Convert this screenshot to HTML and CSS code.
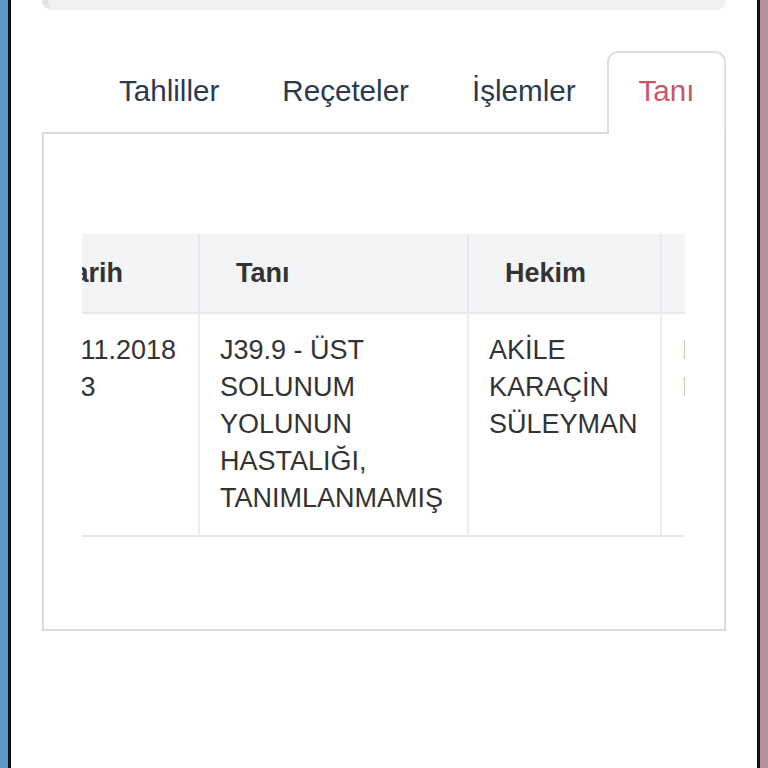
FILE: index.html
```html
<!DOCTYPE html>
<html lang="tr">
<head>
<meta charset="utf-8">
<link rel="stylesheet" href="styles.css">
</head>
<body>
<div class="frame">
  <div class="edge-left"></div>
  <div class="line"></div>
  <main class="main">
    <div class="top-card"></div>
    <nav class="tabs">
      <div class="tab">Tahliller</div>
      <div class="tab">Reçeteler</div>
      <div class="tab">İşlemler</div>
      <div class="tab active">Tanı</div>
    </nav>
    <section class="panel">
      <div class="table-scroll">
        <table class="grid">
          <thead>
            <tr>
              <th class="c1">Tarih</th>
              <th class="c2">Tanı</th>
              <th class="c3">Hekim</th>
              <th class="c4">Birim</th>
            </tr>
          </thead>
          <tbody>
            <tr>
              <td class="c1">12.11.2018 1:53</td>
              <td class="c2">J39.9 - ÜST SOLUNUM YOLUNUN HASTALIĞI, TANIMLANMAMIŞ</td>
              <td class="c3">AKİLE KARAÇİN SÜLEYMAN</td>
              <td class="c4">KBB POLİKLİNİĞİ</td>
            </tr>
          </tbody>
        </table>
      </div>
    </section>
  </main>
  <div class="line"></div>
  <div class="edge-right"></div>
</div>
</body>
</html>
```

FILE: styles.css
```css
* { box-sizing: border-box; }
html, body { margin: 0; padding: 0; }
body {
  width: 768px;
  height: 768px;
  overflow: hidden;
  font-family: "Liberation Sans", Arial, sans-serif;
  background: #fff;
}
.frame {
  display: flex;
  height: 768px;
}
.edge-left { width: 8px; flex: none; background: #5b97c7; }
.edge-right { width: 8px; flex: none; background: #b58f9d; }
.line { width: 3px; flex: none; background: #111; }
.main {
  flex: 1;
  min-width: 0;
  background: #fff;
  padding: 0 31px;
}
.top-card {
  height: 10px;
  background: #f1f1f1;
  border-left: 6px solid #e3e3e3;
  border-radius: 0 0 10px 10px;
}
.tabs {
  display: flex;
  justify-content: flex-end;
  margin-top: 41px;
  margin-bottom: -2px;
  position: relative;
  z-index: 1;
}
.tab {
  font-size: 29.6px;
  line-height: 34px;
  color: #2c384d;
  padding: 21px 29.5px 26px;
  border: 2px solid transparent;
  border-bottom: none;
  border-radius: 11px 11px 0 0;
}
.tab.active {
  color: #c95566;
  border-color: #dedede;
  background: #fff;
}
.panel {
  border: 2px solid #dadada;
  padding: 100px 39px 92px 38px;
  min-width: 0;
}
.table-scroll {
  overflow: hidden;
  width: 100%;
}
.grid {
  border-collapse: separate;
  border-spacing: 0;
  table-layout: fixed;
  width: 839px;
  margin-left: -59px;
  color: #333;
}
.grid .c1 { width: 177px; }
.grid .c2 { width: 269px; }
.grid .c3 { width: 193px; }
.grid .c4 { width: 200px; }
.grid th {
  background: #f3f4f6;
  font-size: 27px;
  line-height: 30px;
  font-weight: bold;
  text-align: left;
  padding: 24px 36px;
  border-right: 2px solid #e8e9ec;
  border-bottom: 2px solid #e6e8eb;
  white-space: nowrap;
  overflow: hidden;
}
.grid td {
  font-size: 27px;
  line-height: 37px;
  padding: 18px 20px;
  vertical-align: top;
  border-right: 2px solid #eceef0;
  border-bottom: 2px solid #e6e8eb;
}
.grid td.c4 {
  color: #b8b8b8;
}
```
